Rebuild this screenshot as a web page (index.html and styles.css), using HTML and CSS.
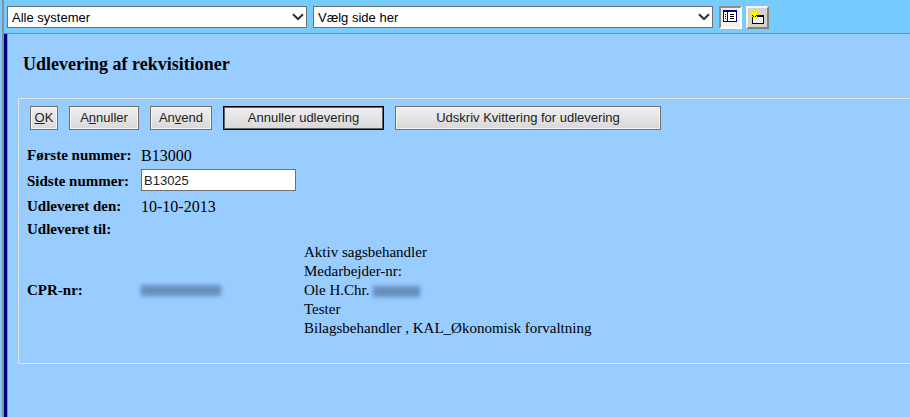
FILE: index.html
```html
<!DOCTYPE html>
<html lang="da">
<head>
    <meta charset="UTF-8">
    <meta name="viewport" content="width=device-width, initial-scale=1.0">
    <title>Udlevering af rekvisitioner</title>
    <link rel="stylesheet" href="styles.css">
</head>
<body>
    <div class="frame">
        <header class="toolbar">
            <div class="select-box select-system">
                <select aria-label="System">
                    <option>Alle systemer</option>
                </select>
                <svg class="arrow" viewBox="0 0 12 8"><path d="M1 1.2L6 6L11 1.2" /></svg>
            </div>
            <div class="select-box select-page">
                <select aria-label="Side">
                    <option>Vælg side her</option>
                </select>
                <svg class="arrow" viewBox="0 0 12 8"><path d="M1 1.2L6 6L11 1.2" /></svg>
            </div>
            <button type="button" class="tool tool-pressed" aria-label="Menu">
                <svg width="19" height="19" viewBox="0 0 19 19" shape-rendering="crispEdges">
                    <rect x="2" y="2" width="14" height="12" fill="#000080" />
                    <rect x="3" y="4" width="3" height="9" fill="#fff" />
                    <rect x="7" y="4" width="8" height="9" fill="#fff" />
                    <path d="M4 6h1v1h-1zM4 8h1v1h-1zM4 10h1v1h-1zM9 6h4v1h-4zM9 8h4v1h-4zM9 10h4v1h-4z" fill="#000" />
                </svg>
            </button>
            <button type="button" class="tool" aria-label="Nyt vindue">
                <svg width="19" height="19" viewBox="0 0 19 19" shape-rendering="crispEdges">
                    <rect x="4" y="7" width="12" height="9" fill="#000" />
                    <rect x="8" y="7" width="7" height="1" fill="#000080" />
                    <rect x="5" y="9" width="10" height="6" fill="#fff" />
                    <path d="M6 10h1v1h-1zM8 10h1v1h-1zM10 10h1v1h-1zM12 10h1v1h-1zM7 12h1v1h-1zM9 12h1v1h-1zM11 12h1v1h-1zM13 12h1v1h-1zM6 14h1v1h-1zM8 14h1v1h-1zM10 14h1v1h-1zM12 14h1v1h-1z" fill="#c8c8c8" />
                    <path d="M6 2h1v9h-1zM2 6h9v1h-9zM3 3h1v1h-1zM4 4h1v1h-1zM5 5h3v3h-3zM9 3h1v1h-1zM8 4h1v1h-1zM3 9h1v1h-1zM4 8h1v1h-1zM9 9h1v1h-1zM8 8h1v1h-1z" fill="#ffff00" />
                </svg>
            </button>
        </header>
        <main class="content">
            <h1>Udlevering af rekvisitioner</h1>
            <form class="panel">
                <div class="buttons">
                    <button type="button" class="btn btn-ok"><u>O</u>K</button>
                    <button type="button" class="btn btn-cancel">A<u>n</u>nuller</button>
                    <button type="button" class="btn btn-apply">An<u>v</u>end</button>
                    <button type="button" class="btn btn-undo">Annuller udlevering</button>
                    <button type="button" class="btn btn-print">Udskriv Kvittering for udlevering</button>
                </div>
                <table>
                    <tr>
                        <th scope="row">Første nummer:</th>
                        <td class="value">B13000</td>
                        <td></td>
                    </tr>
                    <tr>
                        <th scope="row"><label for="sidste">Sidste nummer:</label></th>
                        <td class="value"><input type="text" id="sidste" value="B13025"></td>
                        <td></td>
                    </tr>
                    <tr>
                        <th scope="row">Udleveret den:</th>
                        <td class="value">10-10-2013</td>
                        <td></td>
                    </tr>
                    <tr>
                        <th scope="row">Udleveret til:</th>
                        <td class="value"></td>
                        <td></td>
                    </tr>
                    <tr>
                        <th scope="row">CPR-nr:</th>
                        <td class="value"><span class="masked masked-cpr"></span></td>
                        <td>
                            Aktiv sagsbehandler<br>
                            Medarbejder-nr:<br>
                            Ole H.Chr. <span class="masked masked-name"></span><br>
                            Tester<br>
                            Bilagsbehandler , KAL_Økonomisk forvaltning
                        </td>
                    </tr>
                </table>
            </form>
        </main>
    </div>
</body>
</html>
```

FILE: styles.css
```css
* {
    box-sizing: border-box;
}
body {
    margin: 0;
    padding-left: 2px;
    background-color: #77ccff;
    font-family: "Liberation Serif", "Times New Roman", serif;
    font-size: 15px;
    line-height: 19px;
    color: #000;
}
.frame {
    display: flex;
    flex-direction: column;
    min-height: 100vh;
    border-left: 2px solid #8a8f96;
}
.toolbar {
    display: flex;
    align-items: flex-start;
    height: 34px;
    padding: 6px 3px 0;
    border-bottom: 1px solid #7f8b98;
    background-color: #77ccff;
}
.select-box {
    display: flex;
    position: relative;
    margin-right: 6px;
}
.select-system {
    width: 300px;
}
.select-page {
    width: 400px;
}
select {
    appearance: none;
    width: 100%;
    height: 22px;
    padding: 0 20px 0 4px;
    border: 1px solid #707070;
    border-radius: 0;
    background-color: #fff;
    font-family: "Liberation Sans", Arial, sans-serif;
    font-size: 13px;
    color: #000;
}
.arrow {
    position: absolute;
    top: 7px;
    right: 3px;
    width: 12px;
    height: 8px;
    fill: none;
    stroke: #303030;
    stroke-width: 2;
    pointer-events: none;
}
.tool {
    display: flex;
    width: 23px;
    height: 23px;
    margin-right: 4px;
    padding: 0;
    border: 2px solid;
    border-color: #f4f4f4 #808080 #808080 #f4f4f4;
    background-color: #d6d3ce;
}
.tool svg {
    flex-shrink: 0;
}
.tool-pressed {
    border-color: #8c8c8c #fff #fff #8c8c8c;
    background-color: #f0f0f0;
}
.content {
    flex: 1;
    padding: 20px 0 0 10px;
    border-left: 3px solid #000080;
    background-color: #99ccff;
    box-shadow: inset 1px 0 #8095b0;
}
h1 {
    margin: 0 0 23px;
    padding-left: 6px;
    font-size: 18px;
    line-height: 21px;
}
.panel {
    margin-left: 1px;
    padding: 7px 6px 23px;
    border: 1px solid #dfe3ea;
    border-right: none;
}
.buttons {
    display: flex;
    gap: 11px;
    margin-bottom: 14px;
    padding-left: 5px;
}
.btn {
    height: 24px;
    padding: 0 0 2px;
    border: 1px solid #707070;
    background: linear-gradient(#f0f0f0, #d8d8d8);
    box-shadow: inset 0 0 0 1px #f4f4f4;
    font-family: "Liberation Sans", Arial, sans-serif;
    font-size: 13px;
    color: #222;
}
.btn-ok {
    width: 28px;
}
.btn-cancel {
    width: 70px;
}
.btn-apply {
    width: 62px;
}
.btn-undo {
    width: 161px;
    border-color: #000;
    box-shadow: inset 0 0 0 1px #606468;
}
.btn-print {
    width: 266px;
}
table {
    border-collapse: collapse;
}
th,
td {
    padding: 2px;
    text-align: left;
    vertical-align: middle;
}
th {
    width: 114px;
    white-space: nowrap;
}
.value {
    width: 163px;
    font-size: 16px;
}
input {
    display: block;
    width: 155px;
    height: 22px;
    margin-bottom: 2px;
    padding: 0 2px;
    border: 1px solid #707070;
    background-color: #fff;
    font-family: "Liberation Sans", Arial, sans-serif;
    font-size: 13px;
    color: #222;
}
.masked {
    display: inline-block;
    height: 11px;
    vertical-align: middle;
    background: repeating-linear-gradient(90deg, #6089b8 0 4px, #6c96c5 4px 7px);
    filter: blur(2px);
}
.masked-cpr {
    width: 80px;
    vertical-align: baseline;
}
.masked-name {
    width: 47px;
}
```
